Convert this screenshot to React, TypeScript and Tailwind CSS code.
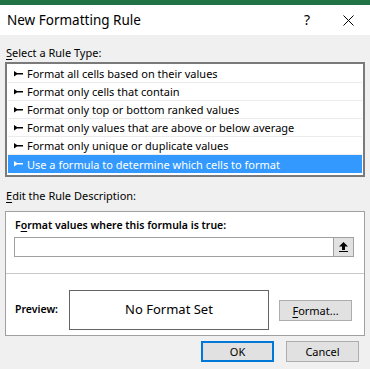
import React from "react";

const Bullet = ({ color }: { color: string }) => (
  <svg width="9" height="6" viewBox="0 0 9 6" className="shrink-0">
    <polygon points="0,0 3,2 9,2 9,3.6 3,3.6 0,5.6" fill={color} />
  </svg>
);

const items = [
  "Format all cells based on their values",
  "Format only cells that contain",
  "Format only top or bottom ranked values",
  "Format only values that are above or below average",
  "Format only unique or duplicate values",
  "Use a formula to determine which cells to format",
];

export default function App() {
  return (
    <div
      className="w-[370px] h-[369px] bg-[#f0f0f0] flex flex-col overflow-hidden text-[#000]"
      style={{ fontFamily: '"Noto Sans", "Open Sans", sans-serif' }}
    >
      <div className="h-[5px] bg-[#217346]" />
      <div className="h-[30px] bg-white flex items-center pl-[7px] pr-[16px]">
        <span className="text-[13.5px] leading-none flex-1 pt-[2px]">New Formatting Rule</span>
        <span className="text-[14px] leading-none mr-[33px]">?</span>
        <svg width="11" height="11" viewBox="0 0 11 11">
          <path d="M0.5 0.5 L10.5 10.5 M10.5 0.5 L0.5 10.5" stroke="#000" strokeWidth="1" />
        </svg>
      </div>
      <div className="px-[5px] flex flex-col">
        <div className="text-[11px] leading-none pt-[12px] pl-[1px] h-[27px]">
          <span className="underline underline-offset-2">S</span>elect a Rule Type:
        </div>
        <div className="h-[115px] border-2 border-[#7a7a7a] bg-white p-[1px] flex flex-col">
          {items.map((t, i) => {
            const sel = i === items.length - 1;
            return (
              <div
                key={t}
                className={
                  sel
                    ? "h-[18px] bg-[#3399ff] text-white flex items-center pl-[6px] gap-[4px] text-[11px]"
                    : "h-[18px] border-b border-[#ececec] flex items-center pl-[6px] gap-[4px] text-[11px]"
                }
              >
                <Bullet color={sel ? "#fff" : "#000"} />
                <span className="leading-none">{t}</span>
              </div>
            );
          })}
        </div>
        <div className="text-[11px] leading-none pt-[13px] pl-[1px] h-[34px]">
          <span className="underline underline-offset-2">E</span>dit the Rule Description:
        </div>
        <div className="h-[125px] border border-[#a0a0a0] bg-white flex flex-col">
          <div className="text-[10.5px] font-semibold leading-none pt-[8px] pl-[9px] h-[25px]">
            F<span className="underline underline-offset-2">o</span>rmat values where this formula is true:
          </div>
          <div className="ml-[8px] mr-[10px] h-[20px] border border-[#a0a0a0] flex justify-end">
            <div className="w-[20px] h-full bg-[#e1e1e1] border-l border-[#a0a0a0] flex items-center justify-center">
              <svg width="9" height="10" viewBox="0 0 9 10">
                <polygon points="4.5,0 9,4.5 6,4.5 6,8 3,8 3,4.5 0,4.5" fill="#000" />
                <rect x="0" y="9" width="9" height="1" fill="#000" />
              </svg>
            </div>
          </div>
          <div className="h-[16px]" />
          <div className="h-px bg-[#c8c8c8]" />
          <div className="flex items-center pl-[9px] mt-[16px]">
            <span className="text-[10.5px] font-semibold w-[54px]">Preview:</span>
            <div className="w-[200px] h-[40px] border border-[#646464] flex items-center justify-center text-[13px]">
              No Format Set
            </div>
            <button className="ml-[10px] w-[73px] h-[21px] bg-[#e1e1e1] border border-[#adadad] text-[11px] leading-none">
              <span className="underline underline-offset-2">F</span>ormat...
            </button>
          </div>
        </div>
        <div className="flex justify-end gap-[12px] pr-[6px] mt-[5px]">
          <button className="w-[73px] h-[21px] bg-[#e1e1e1] border-2 border-[#0078d7] text-[11px] leading-none">
            OK
          </button>
          <button className="w-[73px] h-[21px] bg-[#e1e1e1] border border-[#adadad] text-[11px] leading-none">
            Cancel
          </button>
        </div>
      </div>
    </div>
  );
}
